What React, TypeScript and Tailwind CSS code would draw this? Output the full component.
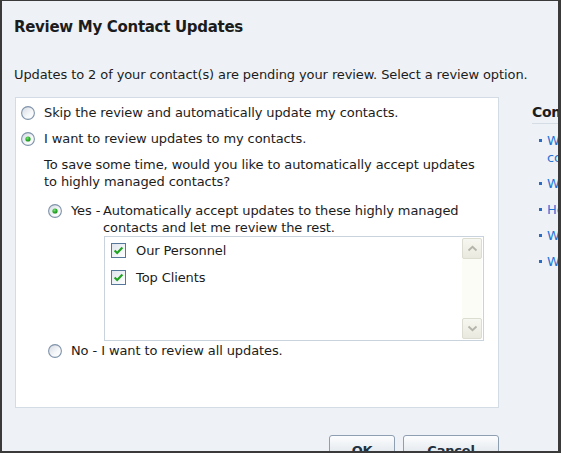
import React from "react";

function Radio({ checked }: { checked?: boolean }) {
  return (
    <svg width="14" height="14" viewBox="0 0 14 14" className="shrink-0">
      <defs>
        <linearGradient id={checked ? "rg-on" : "rg-off"} x1="0" y1="0" x2="1" y2="1">
          <stop offset="0" stopColor="#d3d9e0" />
          <stop offset="0.6" stopColor="#f6f8fa" />
          <stop offset="1" stopColor="#ffffff" />
        </linearGradient>
        <radialGradient id="dot" cx="0.4" cy="0.35" r="0.7">
          <stop offset="0" stopColor="#7fe07f" />
          <stop offset="0.5" stopColor="#2fb32f" />
          <stop offset="1" stopColor="#1a8a1a" />
        </radialGradient>
      </defs>
      <circle cx="7" cy="7" r="6.4" fill={`url(#${checked ? "rg-on" : "rg-off"})`} stroke="#7f93aa" strokeWidth="1.1" />
      {checked && <circle cx="7" cy="7" r="2.6" fill="url(#dot)" />}
    </svg>
  );
}

function Check() {
  return (
    <svg width="15" height="15" viewBox="0 0 15 15" className="shrink-0">
      <defs>
        <linearGradient id="cb" x1="0" y1="0" x2="1" y2="1">
          <stop offset="0" stopColor="#dfe5ec" />
          <stop offset="1" stopColor="#ffffff" />
        </linearGradient>
      </defs>
      <rect x="0.5" y="0.5" width="14" height="14" fill="url(#cb)" stroke="#57779a" />
      <path d="M3.6 7.4 L6.2 10 L11.4 4.6" fill="none" stroke="#21a321" strokeWidth="2.1" />
    </svg>
  );
}

function Chevron({ up }: { up?: boolean }) {
  return (
    <svg width="11" height="7" viewBox="0 0 11 7">
      <path d={up ? "M1.5 5.5 L5.5 1.8 L9.5 5.5" : "M1.5 1.5 L5.5 5.2 L9.5 1.5"} fill="none" stroke="#b4b4aa" strokeWidth="1.8" />
    </svg>
  );
}

function ScrollButton({ up }: { up?: boolean }) {
  return (
    <div className="w-[20px] h-[21px] rounded-[2px] border border-[#dcdcd0] bg-gradient-to-b from-[#f7f7f1] to-[#e9e9df] flex items-center justify-center">
      <Chevron up={up} />
    </div>
  );
}

const links = [
  ["What are highly managed", "contacts?"],
  ["Why review updates?"],
  ["How do updates work?"],
  ["What happens when I skip?"],
  ["Where do updates come from?"],
];

export default function App() {
  return (
    <div className="w-[561px] h-[453px] overflow-hidden box-border border-t border-l-2 border-r-[3px] border-b-2 border-[#3a3a3a] bg-[#eef2f6] text-[#1c1c1c] font-['DejaVu_Sans',sans-serif] tracking-[-0.1px] text-[13px] leading-[17px]">
      <div className="pl-[12px] pt-[17px]">
        <h1 className="text-[15px] leading-[18px] font-bold tracking-[-0.3px]">Review My Contact Updates</h1>
        <p className="mt-[30px] whitespace-nowrap">
          Updates to 2 of your contact(s) are pending your review. Select a review option.
        </p>

        <div className="flex items-start mt-[14px]">
          {/* options panel */}
          <div className="ml-[1px] w-[484px] h-[311px] shrink-0 bg-white border border-[#d3dbe4] pl-[5px] pt-[6px]">
            <label className="flex items-center h-[17px]">
              <Radio />
              <span className="ml-[9px] whitespace-nowrap">Skip the review and automatically update my contacts.</span>
            </label>
            <label className="flex items-center h-[17px] mt-[9px]">
              <Radio checked />
              <span className="ml-[9px] whitespace-nowrap">I want to review updates to my contacts.</span>
            </label>
            <p className="ml-[23px] mt-[9px] whitespace-nowrap">
              To save some time, would you like to automatically accept updates
              <br />
              to highly managed contacts?
            </p>

            <div className="flex items-start ml-[27px] mt-[12px]">
              <div className="h-[17px] flex items-center">
                <Radio checked />
              </div>
              <span className="ml-[9px] w-[32px] shrink-0 whitespace-nowrap">Yes -</span>
              <div>
                <p className="whitespace-nowrap">
                  Automatically accept updates to these highly managed
                  <br />
                  contacts and let me review the rest.
                </p>
                {/* group list */}
                <div className="ml-[1px] w-[380px] h-[105px] border border-[#c9d3dd] bg-white flex">
                  <div className="flex-1 pl-[6px] pt-[5px]">
                    <div className="flex items-center h-[17px]">
                      <Check />
                      <span className="ml-[10px]">Our Personnel</span>
                    </div>
                    <div className="flex items-center h-[17px] mt-[10px]">
                      <Check />
                      <span className="ml-[10px]">Top Clients</span>
                    </div>
                  </div>
                  <div className="w-[20px] my-[1px] mr-[1px] bg-[#fcfcf6] flex flex-col justify-between">
                    <ScrollButton up />
                    <ScrollButton />
                  </div>
                </div>
              </div>
            </div>

            <label className="flex items-center h-[17px] ml-[27px] mt-[1px]">
              <Radio />
              <span className="ml-[9px] whitespace-nowrap">No - I want to review all updates.</span>
            </label>
          </div>

          {/* help sidebar */}
          <aside className="ml-[33px] w-[200px] shrink-0 pt-[7px]">
            <h2 className="text-[14px] leading-[17px] font-bold tracking-[-0.3px] pb-[2px] border-b border-[#d6dce3] whitespace-nowrap">
              Common Questions
            </h2>
            <ul className="mt-[8px] flex flex-col gap-[9px]">
              {links.map((lines, i) => (
                <li key={i} className="flex items-start pl-[7px]">
                  <span className="w-[3px] h-[3px] bg-[#2a6cc4] mt-[7px] shrink-0" />
                  <a className="ml-[5px] text-[#2473d6] whitespace-nowrap">
                    {lines.map((l, j) => (
                      <React.Fragment key={j}>
                        {j > 0 && <br />}
                        {l}
                      </React.Fragment>
                    ))}
                  </a>
                </li>
              ))}
            </ul>
          </aside>
        </div>

        <div className="flex mt-[27px] ml-[315px] gap-[8px]">
          <button className="w-[66px] h-[22px] rounded-[3px] border border-[#8e9fb1] bg-gradient-to-b from-[#fcfdfe] to-[#dfe5eb] font-bold text-[13px] text-[#22303f] tracking-[-0.2px] pt-[6px]">
            OK
          </button>
          <button className="w-[96px] h-[22px] rounded-[3px] border border-[#8e9fb1] bg-gradient-to-b from-[#fcfdfe] to-[#dfe5eb] font-bold text-[13px] text-[#22303f] tracking-[-0.2px] pt-[6px]">
            Cancel
          </button>
        </div>
      </div>
    </div>
  );
}
